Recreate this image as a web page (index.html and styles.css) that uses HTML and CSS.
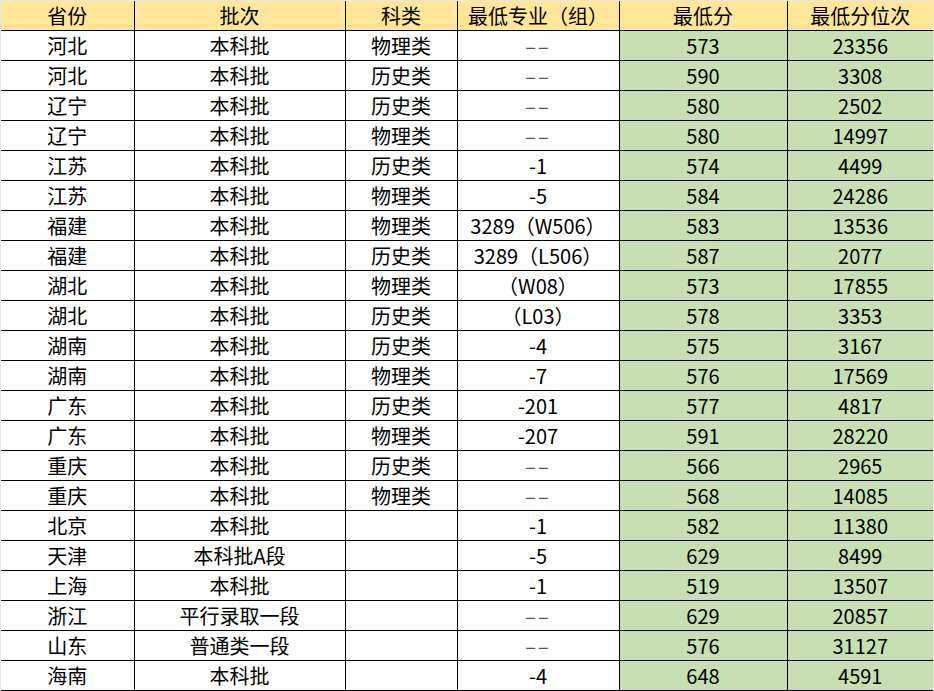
FILE: index.html
```html
<!DOCTYPE html>
<html lang="zh">
<head>
<meta charset="utf-8">
<link rel="stylesheet" href="styles.css">
</head>
<body>
<table class="sheet">
<colgroup>
<col class="c1"><col class="c2"><col class="c3"><col class="c4"><col class="c5"><col class="c6">
</colgroup>
<thead>
<tr><th>省份</th><th>批次</th><th>科类</th><th>最低专业（组）</th><th>最低分</th><th>最低分位次</th></tr>
</thead>
<tbody>
<tr><td>河北</td><td>本科批</td><td>物理类</td><td class="dash">––</td><td class="g">573</td><td class="g">23356</td></tr>
<tr><td>河北</td><td>本科批</td><td>历史类</td><td class="dash">––</td><td class="g">590</td><td class="g">3308</td></tr>
<tr><td>辽宁</td><td>本科批</td><td>历史类</td><td class="dash">––</td><td class="g">580</td><td class="g">2502</td></tr>
<tr><td>辽宁</td><td>本科批</td><td>物理类</td><td class="dash">––</td><td class="g">580</td><td class="g">14997</td></tr>
<tr><td>江苏</td><td>本科批</td><td>历史类</td><td>-1</td><td class="g">574</td><td class="g">4499</td></tr>
<tr><td>江苏</td><td>本科批</td><td>物理类</td><td>-5</td><td class="g">584</td><td class="g">24286</td></tr>
<tr><td>福建</td><td>本科批</td><td>物理类</td><td>3289（W506）</td><td class="g">583</td><td class="g">13536</td></tr>
<tr><td>福建</td><td>本科批</td><td>历史类</td><td>3289（L506）</td><td class="g">587</td><td class="g">2077</td></tr>
<tr><td>湖北</td><td>本科批</td><td>物理类</td><td>（W08）</td><td class="g">573</td><td class="g">17855</td></tr>
<tr><td>湖北</td><td>本科批</td><td>历史类</td><td>（L03）</td><td class="g">578</td><td class="g">3353</td></tr>
<tr><td>湖南</td><td>本科批</td><td>历史类</td><td>-4</td><td class="g">575</td><td class="g">3167</td></tr>
<tr><td>湖南</td><td>本科批</td><td>物理类</td><td>-7</td><td class="g">576</td><td class="g">17569</td></tr>
<tr><td>广东</td><td>本科批</td><td>历史类</td><td>-201</td><td class="g">577</td><td class="g">4817</td></tr>
<tr><td>广东</td><td>本科批</td><td>物理类</td><td>-207</td><td class="g">591</td><td class="g">28220</td></tr>
<tr><td>重庆</td><td>本科批</td><td>历史类</td><td class="dash">––</td><td class="g">566</td><td class="g">2965</td></tr>
<tr><td>重庆</td><td>本科批</td><td>物理类</td><td class="dash">––</td><td class="g">568</td><td class="g">14085</td></tr>
<tr><td>北京</td><td>本科批</td><td></td><td>-1</td><td class="g">582</td><td class="g">11380</td></tr>
<tr><td>天津</td><td>本科批A段</td><td></td><td>-5</td><td class="g">629</td><td class="g">8499</td></tr>
<tr><td>上海</td><td>本科批</td><td></td><td>-1</td><td class="g">519</td><td class="g">13507</td></tr>
<tr><td>浙江</td><td>平行录取一段</td><td></td><td class="dash">––</td><td class="g">629</td><td class="g">20857</td></tr>
<tr><td>山东</td><td>普通类一段</td><td></td><td class="dash">––</td><td class="g">576</td><td class="g">31127</td></tr>
<tr><td>海南</td><td>本科批</td><td></td><td>-4</td><td class="g">648</td><td class="g">4591</td></tr>
</tbody>
</table>
</body>
</html>
```

FILE: styles.css
```css
html, body {
  margin: 0;
  padding: 0;
  background: #e6e6e6;
}
body {
  padding: 1px 0 0 1px;
  font-family: "Noto Sans CJK SC", "Noto Sans", sans-serif;
  font-size: 20px;
  font-weight: 400;
  color: #000;
}
.sheet {
  border-collapse: collapse;
  table-layout: fixed;
  width: 932px;
  background: #fff;
}
.c1 { width: 133px; }
.c2 { width: 211px; }
.c3 { width: 112px; }
.c4 { width: 162px; }
.c5 { width: 168px; }
.c6 { width: 146px; }
.sheet th,
.sheet td {
  height: 29px;
  padding: 0;
  line-height: 29px;
  text-align: center;
  white-space: nowrap;
  overflow: hidden;
  border-bottom: 1px solid #000;
  border-right: 1px solid #000;
}
.sheet th {
  background: #ffe699;
  font-weight: 400;
}
.sheet th:last-child,
.sheet td:last-child {
  border-right: none;
}
.sheet td.g {
  background: #c6e0b4;
}
.sheet td.dash {
  color: #555;
  letter-spacing: 2px;
}
```
